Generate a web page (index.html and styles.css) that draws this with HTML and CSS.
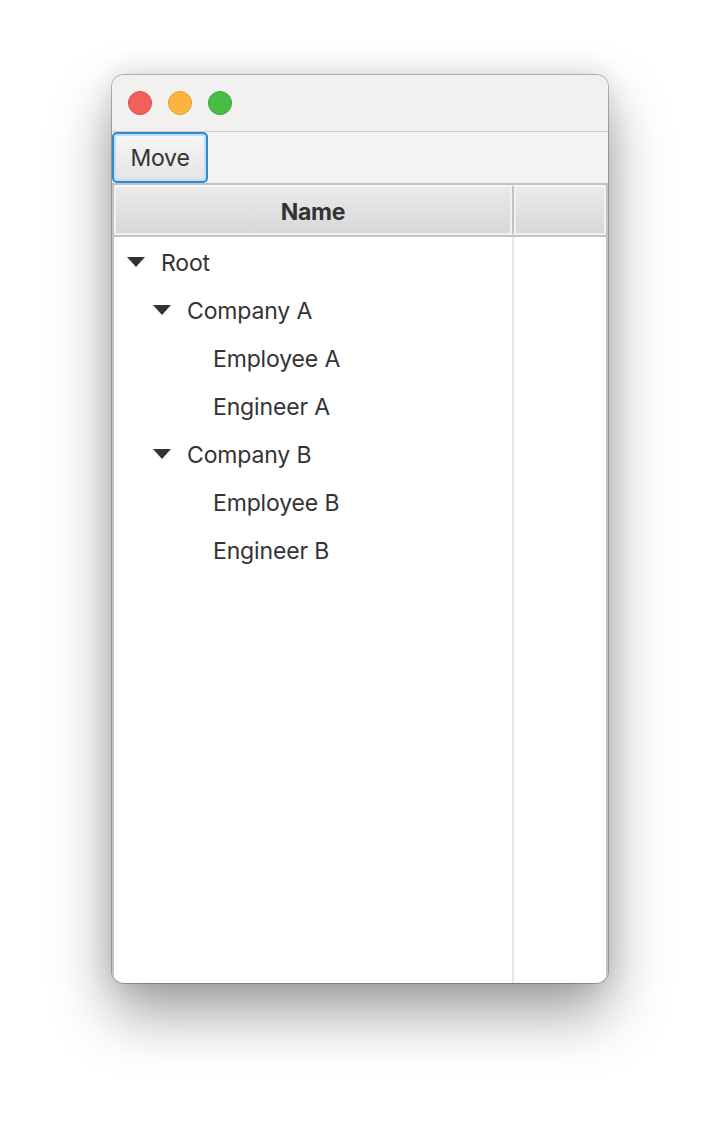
FILE: index.html
```html
<!DOCTYPE html>
<html>
<head>
<meta charset="utf-8">
<link rel="stylesheet" href="styles.css">
</head>
<body>
<div class="stage">
  <div class="window">
    <div class="titlebar">
      <span class="light red"></span>
      <span class="light yellow"></span>
      <span class="light green"></span>
    </div>
    <div class="toolbar">
      <button class="btn">Move</button>
    </div>
    <div class="table">
      <div class="header">
        <div class="hcell name">Name</div>
        <div class="hcell extra"></div>
      </div>
      <div class="body">
        <div class="col-name">
          <div class="row l0"><svg class="arrow" width="18" height="10" viewBox="0 0 18 10"><polygon points="0,0 18,0 9,10" fill="#333"/></svg><span>Root</span></div>
          <div class="row l1"><svg class="arrow" width="18" height="10" viewBox="0 0 18 10"><polygon points="0,0 18,0 9,10" fill="#333"/></svg><span>Company A</span></div>
          <div class="row l2"><span>Employee A</span></div>
          <div class="row l2"><span>Engineer A</span></div>
          <div class="row l1"><svg class="arrow" width="18" height="10" viewBox="0 0 18 10"><polygon points="0,0 18,0 9,10" fill="#333"/></svg><span>Company B</span></div>
          <div class="row l2"><span>Employee B</span></div>
          <div class="row l2"><span>Engineer B</span></div>
        </div>
        <div class="col-extra"></div>
      </div>
    </div>
  </div>
</div>
</body>
</html>
```
FILE: styles.css
```css
html, body {
  margin: 0;
  padding: 0;
  background: #ffffff;
}
.stage {
  padding: 75px 0 0 112px;
  height: 1132px;
  box-sizing: border-box;
}
.window {
  width: 496px;
  height: 908px;
  border-radius: 12px;
  overflow: hidden;
  background: #ffffff;
  display: flex;
  flex-direction: column;
  box-shadow: 0 0 0 1px rgba(0,0,0,0.25), 0 30px 60px rgba(0,0,0,0.38), 0 0 28px rgba(0,0,0,0.12);
  font-family: Inter, "Liberation Sans", sans-serif;
  color: #333333;
}
.titlebar {
  height: 56px;
  background: #f2f1f0;
  border-bottom: 1px solid #cfcfcf;
  display: flex;
  align-items: center;
  padding-left: 16px;
  gap: 16px;
  flex-shrink: 0;
}
.light {
  width: 24px;
  height: 24px;
  border-radius: 50%;
  box-sizing: border-box;
}
.red { background: #f1605a; border: 1px solid #dc4a43; }
.yellow { background: #fbb53e; border: 1px solid #e0a030; }
.green { background: #47bd45; border: 1px solid #36a534; }
.toolbar {
  height: 51px;
  background: #f3f3f3;
  display: flex;
  align-items: flex-start;
  flex-shrink: 0;
}
.btn {
  width: 96px;
  height: 51px;
  margin: 0;
  box-sizing: border-box;
  border: 2px solid #2f8bd0;
  border-radius: 5px;
  box-shadow: inset 0 0 0 2px #c4def0;
  background: linear-gradient(#f6f6f6, #e4e4e4);
  font-family: Inter, "Liberation Sans", sans-serif;
  font-size: 23px;
  letter-spacing: -0.2px;
  color: #333333;
  padding: 1px 0 0 0;
}
.table {
  flex: 1;
  display: flex;
  flex-direction: column;
  border-left: 2px solid #c4c4c4;
  border-right: 2px solid #c4c4c4;
}
.header {
  height: 54px;
  box-sizing: border-box;
  border-top: 2px solid #c2c2c2;
  border-bottom: 2px solid #c2c2c2;
  display: flex;
  flex-shrink: 0;
}
.hcell {
  box-sizing: border-box;
  background: linear-gradient(#ebebeb, #d7d7d7);
  border: 2px solid #f1f1f1;
  border-top-color: #f6f6f6;
  display: flex;
  align-items: center;
  justify-content: center;
}
.hcell.name {
  width: 398px;
  font-weight: 700;
  font-size: 23px;
  letter-spacing: -0.3px;
  padding-top: 3px;
}
.hcell.extra {
  flex: 1;
  border-left: 2px solid #c2c2c2;
  box-shadow: inset 2px 0 0 #f1f1f1;
}
.body {
  flex: 1;
  display: flex;
}
.col-name {
  width: 398px;
  border-right: 2px solid #e6e6e6;
}
.col-extra {
  flex: 1;
}
.row {
  height: 48px;
  display: flex;
  align-items: center;
  font-size: 23px;
  letter-spacing: -0.15px;
}
.row span {
  padding-top: 4px;
}
.arrow {
  margin-right: 16px;
  margin-top: 2px;
  flex-shrink: 0;
}
.l0 { padding-left: 13px; }
.l1 { padding-left: 39px; }
.l2 { padding-left: 99px; }
```
